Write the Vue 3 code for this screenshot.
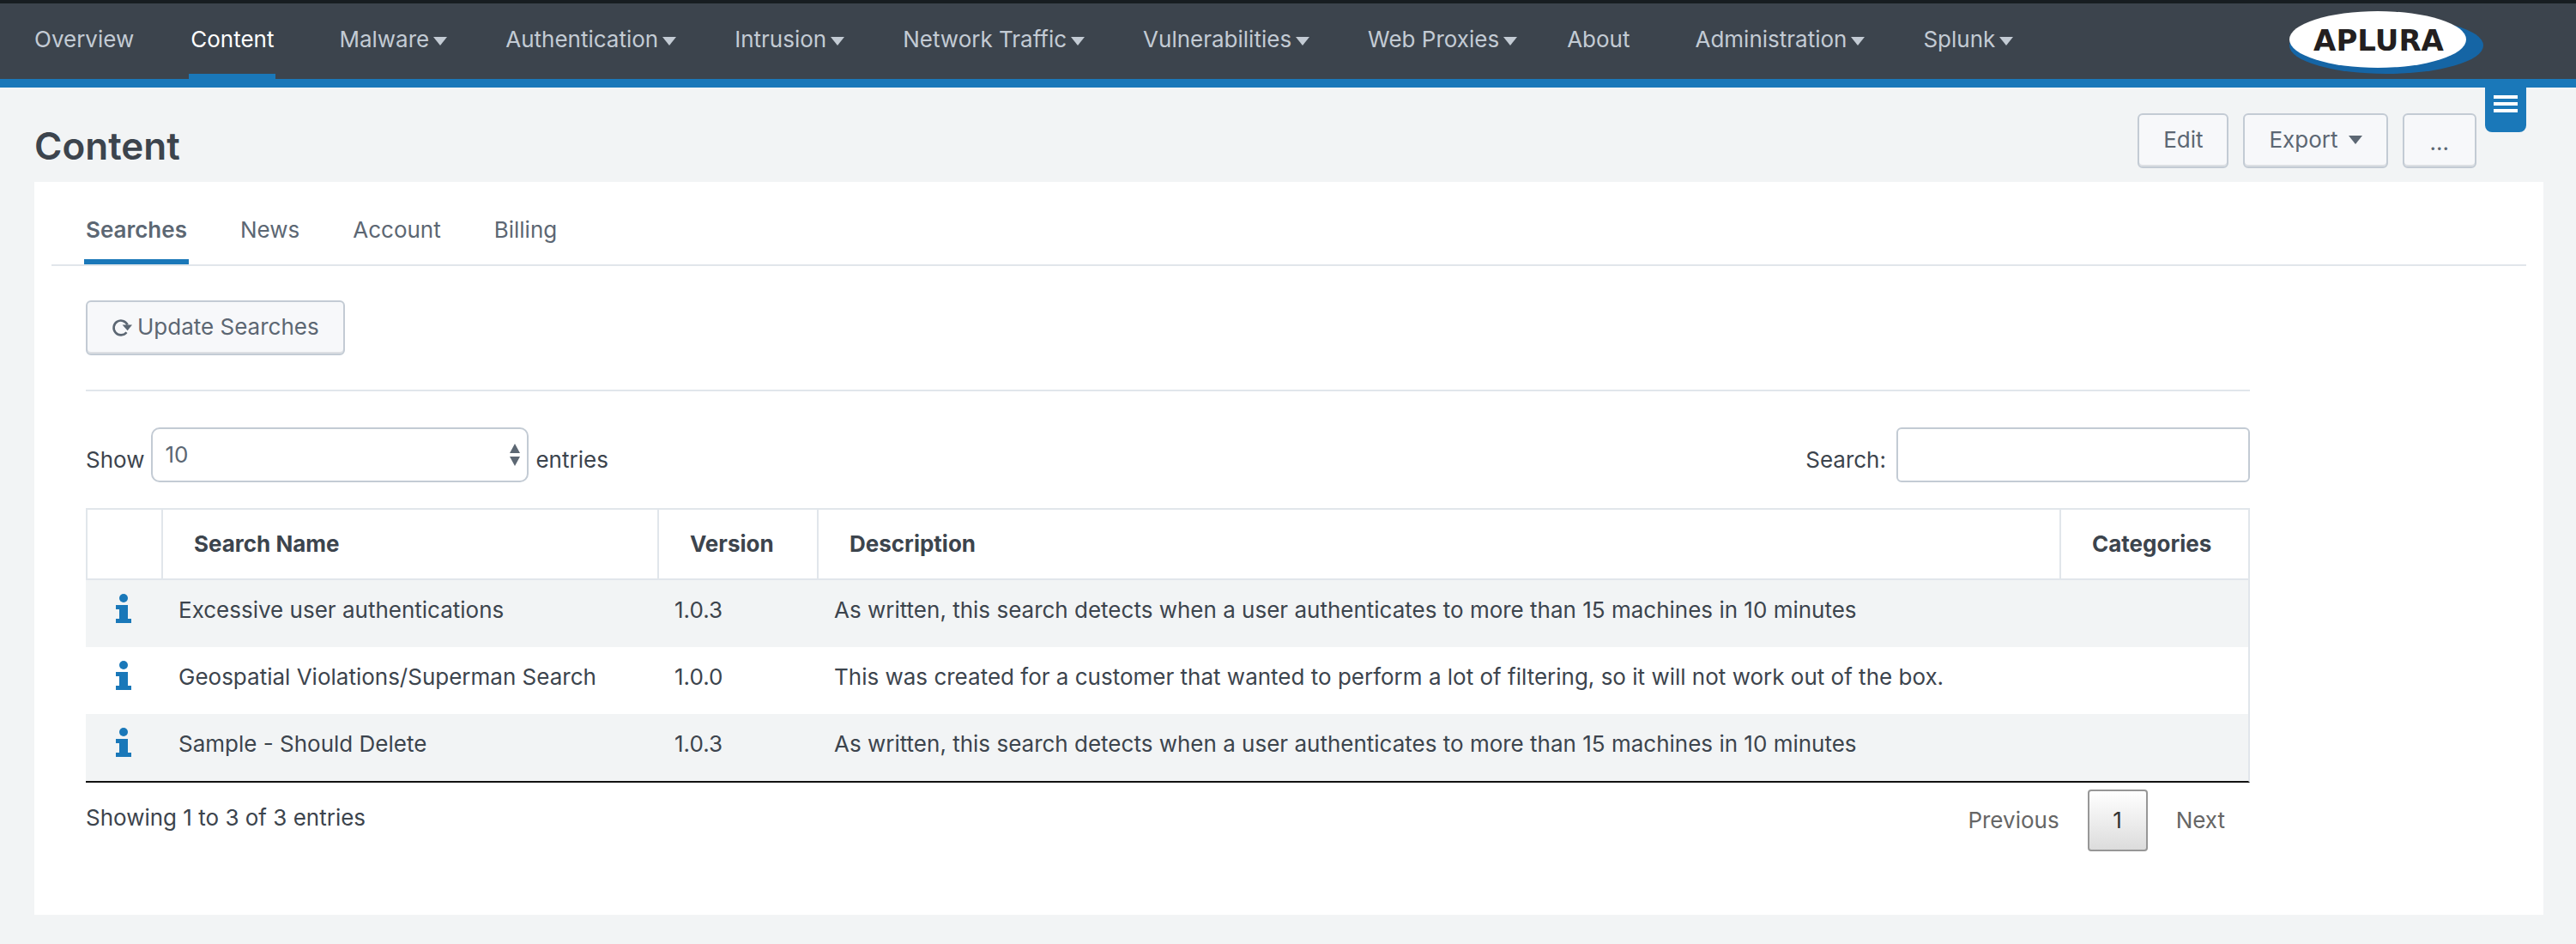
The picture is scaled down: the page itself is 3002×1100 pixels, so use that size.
<script setup>
import { ref } from 'vue'

const navItems = [
  { label: 'Overview' },
  { label: 'Content', active: true },
  { label: 'Malware', menu: true },
  { label: 'Authentication', menu: true },
  { label: 'Intrusion', menu: true },
  { label: 'Network Traffic', menu: true },
  { label: 'Vulnerabilities', menu: true },
  { label: 'Web Proxies', menu: true },
  { label: 'About' },
  { label: 'Administration', menu: true },
  { label: 'Splunk', menu: true },
]

const tabs = ['Searches', 'News', 'Account', 'Billing']
const activeTab = ref('Searches')

const rows = [
  {
    name: 'Excessive user authentications',
    version: '1.0.3',
    description: 'As written, this search detects when a user authenticates to more than 15 machines in 10 minutes',
  },
  {
    name: 'Geospatial Violations/Superman Search',
    version: '1.0.0',
    description: 'This was created for a customer that wanted to perform a lot of filtering, so it will not work out of the box.',
  },
  {
    name: 'Sample - Should Delete',
    version: '1.0.3',
    description: 'As written, this search detects when a user authenticates to more than 15 machines in 10 minutes',
  },
]

const pageSize = ref('10')
const query = ref('')
</script>

<template>
  <div class="page">
    <header class="topbar">
      <nav class="nav">
        <a
          v-for="item in navItems"
          :key="item.label"
          href="#"
          class="nav-item"
          :class="{ menu: item.menu, active: item.active }"
        >
          <span class="nav-label">{{ item.label }}</span>
          <svg v-if="item.menu" class="caret" viewBox="0 0 16 10" aria-hidden="true">
            <path d="M0 0H16L8 10Z" />
          </svg>
        </a>
      </nav>
      <svg class="logo" viewBox="0 0 228 74" role="img" aria-label="Aplura">
        <ellipse cx="114" cy="40" rx="113" ry="33" fill="#1565a5" />
        <ellipse cx="104" cy="33" rx="103" ry="33" fill="#fff" />
        <text x="105" y="46" text-anchor="middle" class="logo-text">APLURA</text>
      </svg>
    </header>

    <main class="main">
      <button class="side-menu" type="button" aria-label="Menu">
        <span></span><span></span><span></span>
      </button>

      <div class="page-head">
        <h1>Content</h1>
        <div class="actions">
          <button class="btn" type="button">Edit</button>
          <button class="btn" type="button">
            Export
            <svg class="caret export-caret" viewBox="0 0 16 10" aria-hidden="true">
              <path d="M0 0H16L8 10Z" />
            </svg>
          </button>
          <button class="btn more" type="button">...</button>
        </div>
      </div>

      <section class="panel">
        <div class="tabs" role="tablist">
          <button
            v-for="tab in tabs"
            :key="tab"
            type="button"
            role="tab"
            class="tab"
            :class="{ selected: tab === activeTab }"
            :aria-selected="tab === activeTab"
            @click="activeTab = tab"
          >
            {{ tab }}
          </button>
        </div>

        <div class="body">
          <button class="btn update" type="button">
            <svg class="refresh" viewBox="0 0 24 22" aria-hidden="true">
              <path d="M17.5 17.2A8.4 8.4 0 1 1 18.6 8.5" fill="none" stroke="currentColor" stroke-width="2.6" />
              <path d="M12.6 8.6H24L18.6 15.2Z" fill="currentColor" />
            </svg>
            Update Searches
          </button>

          <hr />

          <div class="controls">
            <div class="field">
              <label for="page-size">Show</label>
              <div class="select-wrap">
                <select id="page-size" v-model="pageSize">
                  <option>10</option>
                  <option>25</option>
                  <option>50</option>
                  <option>100</option>
                </select>
                <svg class="arrows" viewBox="0 0 14 26" aria-hidden="true">
                  <path d="M7 0L13 11H1ZM1 15H13L7 26Z" />
                </svg>
              </div>
              <span>entries</span>
            </div>
            <div class="field search">
              <label for="search">Search:</label>
              <input id="search" v-model="query" type="search" />
            </div>
          </div>

          <table>
            <colgroup>
              <col class="c-icon" />
              <col class="c-name" />
              <col class="c-version" />
              <col />
              <col class="c-categories" />
            </colgroup>
            <thead>
              <tr>
                <th></th>
                <th>Search Name</th>
                <th>Version</th>
                <th>Description</th>
                <th>Categories</th>
              </tr>
            </thead>
            <tbody>
              <tr v-for="row in rows" :key="row.name">
                <td class="icon-cell">
                  <svg class="info" viewBox="0 0 18 34" role="img" aria-label="Details">
                    <circle cx="9" cy="5" r="5" />
                    <path d="M0 13H14V29H18V34H0V29H4V18H0Z" />
                  </svg>
                </td>
                <td>{{ row.name }}</td>
                <td>{{ row.version }}</td>
                <td>{{ row.description }}</td>
                <td></td>
              </tr>
            </tbody>
          </table>

          <div class="table-foot">
            <div class="summary">Showing 1 to 3 of 3 entries</div>
            <div class="pager">
              <button type="button" class="page-btn">Previous</button>
              <button type="button" class="page-btn current">1</button>
              <button type="button" class="page-btn">Next</button>
            </div>
          </div>
        </div>
      </section>
    </main>
  </div>
</template>

<style>
body {
  margin: 0;
  background: #f2f4f5;
}
</style>

<style scoped>
.page {
  color: #3c444d;
  font: 26px/40px Inter, "Liberation Sans", sans-serif;
}

.page * {
  box-sizing: border-box;
}

button,
input,
select {
  margin: 0;
  font: inherit;
  color: inherit;
}

/* Top navigation */
.topbar {
  display: flex;
  align-items: flex-start;
  justify-content: space-between;
  padding: 0 107px 0 10px;
  background: #3c444d;
  border-top: 4px solid #171d21;
  border-bottom: 10px solid #1a78b9;
}

.nav {
  display: flex;
}

.nav-item {
  display: flex;
  align-items: center;
  padding: 0 34px 0 28px;
  color: #c3cbd4;
  line-height: 84px;
  text-decoration: none;
  white-space: nowrap;
}

.nav-item.menu {
  padding: 0 28px 0 38px;
}

.nav-label {
  height: 88px;
  padding: 0 2px;
}

.active .nav-label {
  color: #fff;
  box-shadow: inset 0 -6px #1a78b9;
}

.caret {
  width: 16px;
  height: 10px;
  margin-left: 3px;
  fill: currentColor;
}

.logo {
  flex: none;
  width: 228px;
  height: 74px;
  margin-top: 9px;
}

.logo-text {
  font: bold 34px "DejaVu Sans", sans-serif;
  fill: #231f20;
}

/* Page heading */
.main {
  position: relative;
  padding: 30px 38px 36px 40px;
}

.side-menu {
  position: absolute;
  top: 0;
  right: 58px;
  display: flex;
  flex-direction: column;
  gap: 4px;
  width: 48px;
  height: 52px;
  padding: 9px 10px;
  border: 0;
  border-radius: 0 0 8px 8px;
  background: #1a78b9;
}

.side-menu span {
  height: 4px;
  background: #fff;
}

.page-head {
  display: flex;
  align-items: flex-start;
  justify-content: space-between;
  padding: 0 78px 4px 0;
}

h1 {
  margin: 0;
  font-size: 44px;
  font-weight: 600;
  line-height: 76px;
}

.actions {
  display: flex;
  gap: 17px;
}

.btn {
  display: flex;
  align-items: center;
  height: 64px;
  padding: 0 28px 2px;
  border: 2px solid #c3cbd4;
  border-radius: 6px;
  background: #f7f8fa;
  box-shadow: inset 0 -2px #dcdfe3;
  color: #5c6773;
}

.export-caret {
  margin-left: 12px;
}

.more {
  padding: 4px 30px 0;
}

/* Panel */
.panel {
  padding: 36px 20px 72px;
  background: #fff;
}

.tabs {
  display: flex;
  gap: 58px;
  padding: 0 38px;
  border-bottom: 2px solid #e1e6eb;
}

.tab {
  padding: 0 2px 14px;
  border: 0;
  border-bottom: 6px solid transparent;
  background: none;
  color: #5c6773;
}

.tab.selected {
  border-color: #1a78b9;
  font-weight: 600;
}

.body {
  padding: 40px 322px 0 40px;
}

.refresh {
  width: 24px;
  height: 22px;
  margin-right: 6px;
}

hr {
  height: 2px;
  margin: 40px 0 42px;
  border: 0;
  background: #e1e6eb;
}

.controls {
  display: flex;
  justify-content: space-between;
  height: 64px;
  margin-bottom: 30px;
}

.field {
  display: flex;
  gap: 8px;
  line-height: 76px;
}

.search {
  gap: 12px;
}

.select-wrap {
  position: relative;
  width: 440px;
}

select,
input {
  display: block;
  height: 64px;
  padding: 0 14px;
  border: 2px solid #c3cbd4;
  background: #fff;
  color: #5c6773;
  line-height: 40px;
}

select {
  width: 100%;
  border-radius: 10px;
  appearance: none;
}

input {
  width: 412px;
  border-radius: 6px;
  appearance: none;
}

.arrows {
  position: absolute;
  top: 19px;
  right: 9px;
  width: 14px;
  height: 26px;
  fill: #5c6773;
  pointer-events: none;
}

/* Table */
table {
  width: 100%;
  table-layout: fixed;
  border-spacing: 0;
  border-right: 2px solid #e1e6eb;
  border-bottom: 2px solid #111;
}

.c-icon {
  width: 88px;
}

.c-name {
  width: 578px;
}

.c-version {
  width: 186px;
}

.c-categories {
  width: 220px;
}

th {
  height: 84px;
  padding: 0 36px;
  border: solid #e1e6eb;
  border-width: 2px 0 2px 2px;
  text-align: left;
  font-weight: 700;
}

td {
  padding: 15px 20px 23px;
  vertical-align: top;
}

tbody tr:nth-child(odd) {
  background: #f2f4f5;
}

.icon-cell {
  padding: 16px 0 0 35px;
}

.info {
  display: block;
  width: 18px;
  height: 34px;
  fill: #1a78b9;
}

.table-foot {
  display: flex;
  justify-content: space-between;
}

.summary {
  line-height: 82px;
}

.pager {
  display: flex;
  gap: 4px;
  padding-top: 8px;
}

.page-btn {
  height: 72px;
  padding: 0 27px;
  border: 2px solid transparent;
  border-radius: 4px;
  background: none;
  color: #666;
}

.page-btn.current {
  min-width: 70px;
  border-color: #979797;
  background: linear-gradient(#fff, #dcdcdc);
  color: #333;
}
</style>
